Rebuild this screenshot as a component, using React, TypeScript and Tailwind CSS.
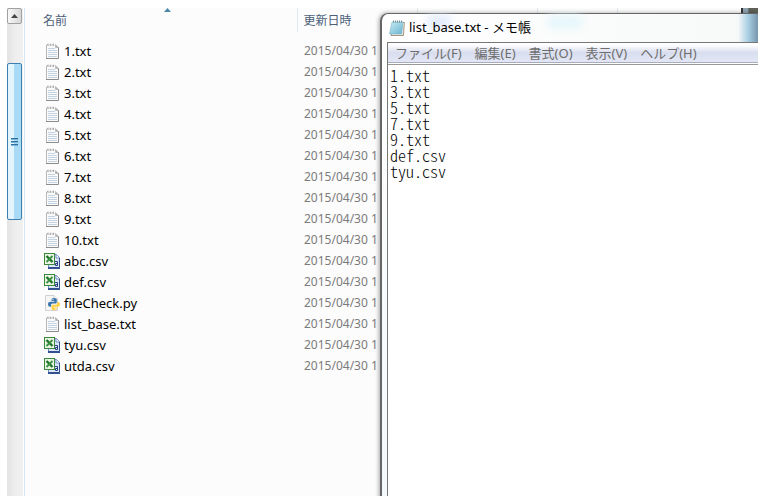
import React from "react";

type Kind = "txt" | "csv" | "py";

const files: { name: string; kind: Kind }[] = [
  { name: "1.txt", kind: "txt" },
  { name: "2.txt", kind: "txt" },
  { name: "3.txt", kind: "txt" },
  { name: "4.txt", kind: "txt" },
  { name: "5.txt", kind: "txt" },
  { name: "6.txt", kind: "txt" },
  { name: "7.txt", kind: "txt" },
  { name: "8.txt", kind: "txt" },
  { name: "9.txt", kind: "txt" },
  { name: "10.txt", kind: "txt" },
  { name: "abc.csv", kind: "csv" },
  { name: "def.csv", kind: "csv" },
  { name: "fileCheck.py", kind: "py" },
  { name: "list_base.txt", kind: "txt" },
  { name: "tyu.csv", kind: "csv" },
  { name: "utda.csv", kind: "csv" },
];

const menus = ["ファイル(F)", "編集(E)", "書式(O)", "表示(V)", "ヘルプ(H)"];

const listText = "1.txt\n3.txt\n5.txt\n7.txt\n9.txt\ndef.csv\ntyu.csv";

function TextIcon() {
  return (
    <svg width="16" height="16" viewBox="0 0 16 16" aria-hidden="true">
      <path d="M2.5 2V15.5H14.5V4.5L12 2Z" fill="#fafafa" />
      <path d="M2.5 2V15.5" stroke="#b8b8b8" />
      <path d="M14.5 4V15.5H2" fill="none" stroke="#8c8c8c" />
      <path d="M11.5 1.5V4.5H14.5Z" fill="#b4b4b4" stroke="#a8a8a8" strokeWidth=".6" />
      <path d="M2.5 2.5L4 .8V3M5.2 2.5L6.7 .8V3M8 2.5L9.5 .8V3" fill="none" stroke="#a0a0a0" strokeWidth=".9" />
      <path d="M4 5.5H11M4 7.5H13M4 9.5H13M4 11.5H13M4 13.5H13" stroke="#c3d3e2" />
    </svg>
  );
}

function CsvIcon() {
  return (
    <svg width="16" height="16" viewBox="0 0 16 16" aria-hidden="true">
      <path d="M4.5 1.5H12.5L15.5 4.5V15.5H4.5Z" fill="#dce8fa" stroke="#6f8cc4" />
      <path d="M12 1.5V5H15.5" fill="#fff" stroke="#6f8cc4" />
      <path d="M15.5 5V14.5H4" fill="none" stroke="#33508f" />
      <path d="M4 15.5H16" stroke="#33508f" />
      <rect x=".5" y=".5" width="10" height="11" fill="#e9f4e4" stroke="#3b8a3c" />
      <path d="M2.5 3L8.5 9" stroke="#1f7429" strokeWidth="2.4" />
      <path d="M8.5 3L2.5 9" stroke="#3a9142" strokeWidth="1.8" />
      <path d="M11 8.5H13.5V12.5H11.5V10.5H13.5" fill="none" stroke="#283f86" />
    </svg>
  );
}

function PythonIcon() {
  return (
    <svg width="16" height="16" viewBox="0 0 16 16" aria-hidden="true">
      <path d="M1.5 .5H10L13.5 4V15.5H1.5Z" fill="#f6f6f6" stroke="#d2d2d2" />
      <path d="M10 .5V4H13.5" fill="#fff" stroke="#cacaca" />
      <path d="M10 3C7.8 3 7.5 4 7.5 5V6H10.5V6.7H6.2C4.6 6.7 4 8 4 9.3S4.7 11.8 6 11.8H7V10.3C7 9.2 7.8 8.6 9 8.6H11.2C12.3 8.6 12.8 7.9 12.8 7V5C12.8 3.7 11.8 3 10 3Z" fill="#3975aa" />
      <path d="M10.2 15.3C12.4 15.3 12.7 14.3 12.7 13.3V12.4H9.8V11.8H14C15.4 11.8 16 10.6 16 9.3S15.4 6.9 14 6.9H13.4V8C13.4 9.2 12.7 9.8 11.5 9.8H9.2C8.1 9.8 7.5 10.4 7.5 11.4V13.3C7.5 14.6 8.5 15.3 10.2 15.3Z" fill="#ffd147" />
      <circle cx="9" cy="4.6" r=".6" fill="#fff" />
      <circle cx="11.3" cy="13.8" r=".6" fill="#fff" />
    </svg>
  );
}

function NotepadIcon() {
  return (
    <svg width="16" height="16" viewBox="0 0 16 16" aria-hidden="true">
      <defs>
        <linearGradient id="page" x1="0" y1="0" x2="1" y2="1">
          <stop offset="0" stopColor="#c9edf5" />
          <stop offset="1" stopColor="#68b3cf" />
        </linearGradient>
      </defs>
      <path d="M4 2.5H15.4L14.4 15.5H2Z" fill="#f2efe6" stroke="#8a7d64" strokeWidth=".8" />
      <path d="M3 2H14L12.7 14H.5Z" fill="url(#page)" stroke="#79b4c8" strokeWidth=".6" />
      <path d="M4.5 .5V2.5M6.5 .5V2.5M8.5 .5V2.5M10.5 .5V2.5M12.5 .5V2.5" stroke="#61757e" strokeWidth=".8" />
    </svg>
  );
}

const icons: Record<Kind, () => React.JSX.Element> = {
  txt: TextIcon,
  csv: CsvIcon,
  py: PythonIcon,
};

function ScrollBar() {
  return (
    <div className="flex w-4 shrink-0 flex-col bg-gradient-to-r from-[#e3e3e3] via-[#eeeeee] to-[#f0f0f0]">
      <button
        type="button"
        aria-label="上へスクロール"
        className="flex h-4 w-[15px] shrink-0 items-center justify-center rounded-xs border border-[#a0a0a0] bg-gradient-to-r from-[#f8f8f8] to-[#d8d8d8]"
      >
        <svg width="7" height="4" viewBox="0 0 7 4" aria-hidden="true">
          <path d="M0 4L3.5 0L7 4Z" fill="#444" />
        </svg>
      </button>
      <div className="mt-[39px] flex h-[157px] w-[15px] shrink-0 items-center justify-center rounded-xs border border-[#3c7fb1] bg-gradient-to-r from-[#e3f4fc] from-45% to-[#a9dbf6] to-50%">
        <svg width="7" height="8" viewBox="0 0 7 8" aria-hidden="true">
          <path d="M0 .5H7M0 3.5H7M0 6.5H7" stroke="#2f6f9f" />
          <path d="M0 1.5H7M0 4.5H7M0 7.5H7" stroke="#78b4d8" />
        </svg>
      </div>
    </div>
  );
}

function FileList() {
  return (
    <div className="min-w-0 flex-1 overflow-hidden border-l border-[#d6e5f5] bg-[#fcfcfc]">
      <table className="w-full table-fixed border-collapse text-left">
        <thead>
          <tr className="h-6 text-xs text-[#4c607a]">
            <th className="relative w-[272px] border-r border-[#e2e8f0] p-0 pt-0.5 pl-[18px] font-normal">
              名前
              <svg className="absolute top-0 left-[139px]" width="7" height="4" viewBox="0 0 7 4" aria-hidden="true">
                <path d="M0 4L3.5 0L7 4Z" fill="#4f87ab" />
              </svg>
            </th>
            <th className="w-[120px] border-r border-[#e2e8f0] p-0 pt-0.5 pl-1.5 font-normal">更新日時</th>
            <th className="w-[120px] border-r border-[#e2e8f0] p-0" />
            <th className="w-[80px] border-r border-[#e2e8f0] p-0" />
            <th className="p-0" />
          </tr>
        </thead>
        <tbody className="before:block before:h-2">
          {files.map(({ name, kind }) => {
            const Icon = icons[kind];
            return (
              <tr key={name} className="h-[21px]">
                <td className="p-0 pl-[19px]">
                  <span className="flex items-center gap-1 text-[13px] leading-5 text-black">
                    <Icon />
                    {name}
                  </span>
                </td>
                <td className="p-0 pl-[7px] text-xs whitespace-nowrap text-[#7b7b7b]">2015/04/30 1</td>
              </tr>
            );
          })}
        </tbody>
      </table>
    </div>
  );
}

function Notepad() {
  return (
    <section className="absolute top-[5px] right-0 -bottom-2 left-[373px] flex flex-col rounded-tl-lg border-t border-l-2 border-[#666] bg-gradient-to-b from-white to-[#f3f8fb] pl-[5px] shadow-[-1px_0_4px_rgba(0,0,0,0.35)]">
      <header className="relative flex h-7 shrink-0 items-center gap-1 bg-gradient-to-r from-white to-[#f7f8f8] pl-0.5 text-[13px] text-black">
        <span className="absolute top-0.5 left-10 h-3 w-6 rounded-full bg-[#dfe9fa] blur-xs" />
        <span className="absolute top-0.5 left-40 h-3 w-9 rounded-full bg-[#e3f6fc] blur-xs" />
        <span className="absolute top-0 right-0 h-7 w-5 bg-gradient-to-r from-[#f7f8f8] via-[#a9cfe4] to-[#7896ab]" />
        <NotepadIcon />
        <h1 className="relative">list_base.txt - メモ帳</h1>
      </header>
      <div className="flex min-h-0 flex-1 flex-col border-t border-l border-[#777] bg-white">
        <nav className="flex h-5 shrink-0 items-center gap-[13px] border-b border-[#a8adbd] bg-gradient-to-b from-white from-10% via-[#d9deef] via-50% to-[#e2e6f5] pl-[7px] text-[13px] leading-5 text-[#6d6d6d]">
          {menus.map((m) => (
            <button key={m} type="button" className="whitespace-nowrap">
              {m}
            </button>
          ))}
        </nav>
        <textarea
          aria-label="本文"
          defaultValue={listText}
          className="mt-px min-h-0 flex-1 resize-none border-t border-[#999] px-0.5 pt-0.5 font-['Noto_Sans_CJK_JP',monospace] text-base leading-4 font-light text-black outline-none [font-feature-settings:'hwid']"
        />
      </div>
    </section>
  );
}

export default function App() {
  return (
    <main className="h-screen bg-white py-2 pr-2 pl-[7px] font-['Noto_Sans','Noto_Sans_CJK_JP',sans-serif]">
      <div className="relative flex h-full gap-px overflow-hidden">
        <ScrollBar />
        <FileList />
        <span className="absolute top-0 right-0 h-[5px] w-[17px] border-l-2 border-[#333] bg-gradient-to-r from-[#8fa3b0] from-30% to-[#5f6258] to-40%" />
        <Notepad />
      </div>
    </main>
  );
}
